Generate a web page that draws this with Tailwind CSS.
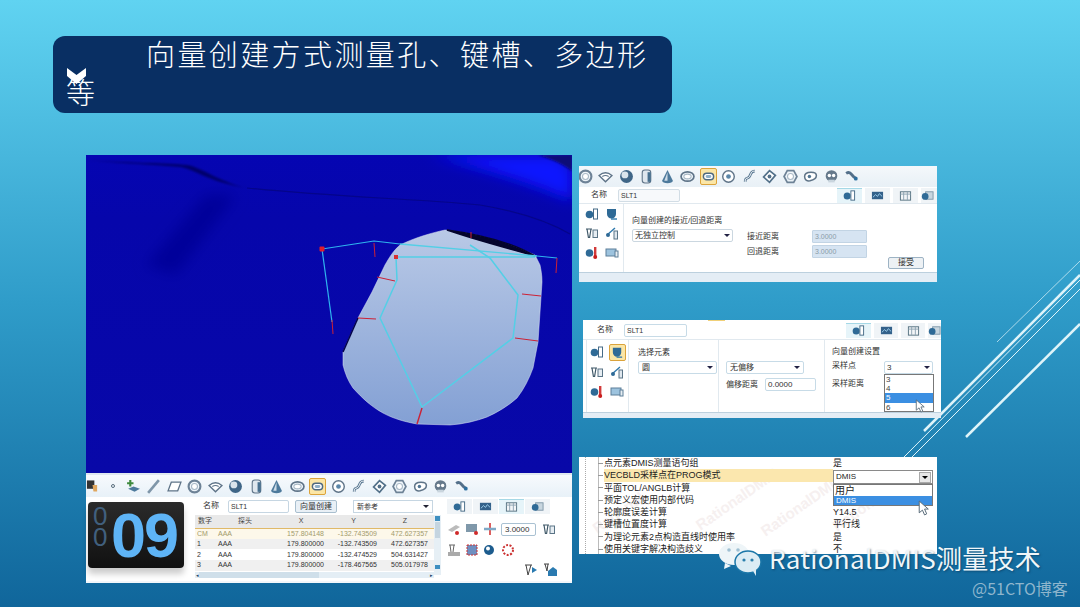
<!DOCTYPE html>
<html lang="en">

<head>
  <meta charset="UTF-8">
  <meta name="viewport" content="width=device-width, initial-scale=1.0">
  <script src="https://cdn.jsdelivr.net/npm/@tailwindcss/browser@4"></script>
  <title>向量创建方式测量孔、键槽、多边形等</title>
</head>

<body class="m-0 overflow-hidden">
  <!-- hidden symbols for the toolbar icons -->
  <svg width="0" height="0" class="absolute">
    <defs>
      <symbol id="i-ring" viewBox="0 0 14 14"><circle cx="7" cy="7" r="5.500" fill="none" stroke="#6d8296" stroke-width="2"/><circle cx="7" cy="7" r="2.800" fill="#fff" stroke="#a9b9c6"/></symbol>
      <symbol id="i-wifi" viewBox="0 0 14 14"><path d="M1 6q6-5 12 0l-6 6z" fill="#fff" stroke="#5f7488" stroke-width="1.300"/><path d="M4 7q3-2 6 0" fill="none" stroke="#5f7488"/></symbol>
      <symbol id="i-ball" viewBox="0 0 14 14"><circle cx="7" cy="7" r="6" fill="#3f6687"/><circle cx="5.500" cy="5.500" r="3.200" fill="#d9e4ec"/></symbol>
      <symbol id="i-cyl" viewBox="0 0 14 14"><rect x="3" y="1" width="8" height="12" rx="2.500" fill="#dfe7ee" stroke="#5f7488"/><rect x="8" y="3" width="3" height="9" fill="#48708f"/></symbol>
      <symbol id="i-cone" viewBox="0 0 14 14"><path d="M7 1 12 11a5 2.400 0 0 1-10 0z" fill="#4d7a9c"/><path d="M7 3 4 11h3z" fill="#cfdde8"/></symbol>
      <symbol id="i-oval" viewBox="0 0 14 14"><ellipse cx="7" cy="7" rx="6" ry="4.400" fill="none" stroke="#5f7488" stroke-width="1.600"/><ellipse cx="7" cy="7" rx="3.400" ry="2.200" fill="#fff" stroke="#a9b9c6"/></symbol>
      <symbol id="i-slot" viewBox="0 0 14 14"><rect x="1.500" y="3.500" width="11" height="7" rx="3.500" fill="#fff" stroke="#4f6a80" stroke-width="1.600"/><rect x="4" y="5.500" width="6" height="3" rx="1.500" fill="#8fb0c8"/></symbol>
      <symbol id="i-target" viewBox="0 0 14 14"><circle cx="7" cy="7" r="5.400" fill="#fff" stroke="#5f7488" stroke-width="1.300"/><circle cx="7" cy="7" r="2.200" fill="#5a86a8"/></symbol>
      <symbol id="i-curve" viewBox="0 0 14 14"><path d="M3 12c0-5 2-2 4-5s1-5 5-5" fill="none" stroke="#5f7d96" stroke-width="2.600"/><path d="M3 12c0-5 2-2 4-5s1-5 5-5" fill="none" stroke="#fff" stroke-width=".9"/></symbol>
      <symbol id="i-diamond" viewBox="0 0 14 14"><path d="M7 1.500 12.500 6 7 12.500 1.500 7.500z" fill="#fff" stroke="#527089" stroke-width="1.600"/><circle cx="7" cy="7" r="1.800" fill="#527089"/></symbol>
      <symbol id="i-hex" viewBox="0 0 14 14"><path d="M4 1.500h6L13 7l-3 5.500H4L1 7z" fill="none" stroke="#6d8296" stroke-width="1.600"/><circle cx="7" cy="7" r="2.800" fill="#fff" stroke="#a9b9c6"/></symbol>
      <symbol id="i-cam" viewBox="0 0 14 14"><path d="M1.500 7c0-3 3-4 6-4 3 0 5 1 5 3s-2 4-6 5c-3 .5-5-1-5-4z" fill="#fff" stroke="#5f7488" stroke-width="1.400"/><circle cx="6" cy="7" r="1.600" fill="#4f7492"/></symbol>
      <symbol id="i-gear" viewBox="0 0 14 14"><circle cx="7" cy="6.500" r="5.400" fill="#66798b"/><circle cx="5" cy="6" r="1.600" fill="#fff"/><circle cx="9" cy="6" r="1.600" fill="#fff"/><rect x="4" y="10" width="6" height="2.500" fill="#c9d5de"/></symbol>
      <symbol id="i-pipe" viewBox="0 0 14 14"><path d="M2 4q3-2 5 1t5 4" fill="none" stroke="#54708a" stroke-width="2.600"/><circle cx="11" cy="9" r="1.800" fill="#2d6f9f"/></symbol>
      <symbol id="i-probe" viewBox="0 0 14 14"><circle cx="4.500" cy="7.500" r="3.800" fill="#2f6a96"/><rect x="8.500" y="2" width="4" height="10" fill="#fff" stroke="#456a86"/></symbol>
      <symbol id="i-wave" viewBox="0 0 14 14"><rect x="1" y="3" width="12" height="8" fill="#33618a"/><path d="M2 9l3-3 2 2 2-3 3 3" fill="none" stroke="#9fd0ee"/></symbol>
      <symbol id="i-table" viewBox="0 0 14 14"><rect x="1.500" y="3" width="11" height="9" fill="#f2f5f7" stroke="#54707f"/><path d="M1.500 5.500h11M5 3v9M9 3v9" stroke="#8ea3b1"/></symbol>
      <symbol id="i-cube" viewBox="0 0 14 14"><rect x="5" y="3" width="8" height="8" fill="#c8d6df" stroke="#7f97a8"/><circle cx="4.500" cy="8" r="3.600" fill="#2f6a96"/></symbol>
      <symbol id="i-fork" viewBox="0 0 14 14"><path d="M1 3h6M2 3l1.500 9M6 3 4.500 12" fill="none" stroke="#3f5868" stroke-width="1.200"/><rect x="8" y="4" width="4.500" height="7.500" fill="#e6edf2" stroke="#5a7486"/></symbol>
      <symbol id="i-branch" viewBox="0 0 14 14"><path d="M2 9l8-7" stroke="#2f79ad" stroke-width="1.400"/><circle cx="3" cy="9" r="2" fill="#2f6a96"/><rect x="9" y="5" width="3.500" height="8" fill="#dfe7ee" stroke="#5a7486"/></symbol>
      <symbol id="i-therm" viewBox="0 0 14 14"><circle cx="4.500" cy="7" r="3.800" fill="#2f6a96"/><rect x="9" y="1" width="2.400" height="9" fill="#d23a3a"/><circle cx="10.200" cy="11" r="2" fill="#c81e1e"/></symbol>
      <symbol id="i-screen" viewBox="0 0 14 14"><rect x="1" y="3" width="10" height="7" fill="#9dc3de" stroke="#5d7f99"/><rect x="10" y="5" width="3" height="6" fill="#e6edf2" stroke="#5d7f99"/></symbol>
      <symbol id="i-head" viewBox="0 0 14 14"><path d="M2 2h9v5a4.500 4.500 0 0 1-9 0z" fill="#2f6a96"/><path d="M6 12h6" stroke="#2f79ad" stroke-width="1.400"/></symbol>
    </defs>
  </svg>

  <div class="relative w-[1080px] h-[607px] overflow-hidden bg-gradient-to-b from-[#60d3f1] via-[#2f9cc9] to-[#10669b] font-['Liberation_Sans','Noto_Sans_CJK_SC',sans-serif]">

    <!-- slide decoration lines -->
    <svg class="absolute inset-0" width="1080" height="607" viewBox="0 0 1080 607">
      <g stroke="#dff4f9" fill="none">
        <path d="M997 342 1080 261" stroke-width="1" opacity=".7"/>
        <path d="M924 431 1080 275" stroke-width="2.500"/>
        <path d="M904 457 1080 280" stroke-width="1"/>
        <path d="M912 457 1080 289" stroke-width="1"/>
        <path d="M966 437 1080 324" stroke-width="2.500"/>
      </g>
    </svg>

    <!-- title -->
    <div class="absolute left-[53px] top-[36px] w-[619px] h-[77px] rounded-[12px] bg-[#092f63] text-white font-['Noto_Sans_CJK_SC','Liberation_Serif',serif] font-light">
      <div class="-mt-[2px]">
        <p class="pl-[93px] text-[29px] leading-[38px] tracking-[2.400px] whitespace-nowrap">向量创建方式测量孔、键槽、多边形</p>
        <p class="pl-[13px] text-[29px] leading-[38px]">等</p>
      </div>
      <svg class="absolute left-[14px] top-[32px]" width="19" height="16" viewBox="0 0 19 16"><path d="M0 0 9.500 7 19 0V8L9.500 16 0 8z" fill="#fff"/></svg>
    </div>

    <!-- 3d view -->
    <svg class="absolute left-[86px] top-[155px]" width="486" height="318" viewBox="0 0 486 318">
      <defs>
        <linearGradient id="plate" x1="0" y1="0" x2="0" y2="1">
          <stop offset="0" stop-color="#b9c9e6"/>
          <stop offset="1" stop-color="#83a0d4"/>
        </linearGradient>
        <linearGradient id="field" x1="0" y1="0" x2="0" y2="1">
          <stop offset="0" stop-color="#0505b2"/>
          <stop offset=".2" stop-color="#0606ab"/>
          <stop offset="1" stop-color="#0808a8"/>
        </linearGradient>
        <filter id="soft" x="-20%" y="-50%" width="140%" height="200%"><feGaussianBlur stdDeviation="7"/></filter>
        <filter id="soft2" x="-20%" y="-50%" width="140%" height="200%"><feGaussianBlur stdDeviation="1.200"/></filter>
      </defs>
      <rect width="486" height="318" fill="url(#field)"/>
      <path d="M344 0H470L486 14V46C450 30 400 14 344 0z" fill="#0a14ff" filter="url(#soft)"/>
      <path d="M452 0H486V16C476 8 464 4 452 0z" fill="#0a0c78" filter="url(#soft2)"/>
      <path d="M60 110 120 40 150 40 90 120z" fill="#06069a" filter="url(#soft)"/>
      <!-- crease across the part -->
      <path d="M1 5C40 8 80 8 101 10 115 12 135 28 161 33 120 26 110 15 95 12 60 9 30 8 1 5z" fill="#05056a" filter="url(#soft2)"/>
      <path d="M161 33C210 38 260 41 294 43 330 45 365 47 394 50 430 56 460 65 484 79" fill="none" stroke="#05058a" stroke-width="1.200"/>
      <!-- lit slot -->
      <path d="M359 75C345 78 328 83 314 90 307 96 303 103 299 110L286 137 272 163 257 197 257 210C259 218 262 226 267 233 277 244 286 252 297 258 308 264 320 267 331 269L364 270C378 269 390 266 401 262 412 257 422 251 431 243 438 234 443 224 447 213L452 187 456 127C456 120 455 115 454 110L449 100C433 93 417 87 401 83 387 79 373 77 359 75z" fill="url(#plate)" stroke="#dfe7f5" stroke-width=".5"/>
      <path d="M361 75C390 79 425 87 449 101 425 94 390 85 361 75z" fill="#04042c" stroke="#04042c" stroke-width="1.500"/>
      <path d="M272 163 257 197" stroke="#03034a" stroke-width="1.500"/>
      <!-- measured path -->
      <g fill="none" stroke-linejoin="round">
        <path d="M236 94 288 86 314 89" stroke="#2fb4ee" stroke-width="1.200"/>
        <path d="M236 94 246 167" stroke="#2fb4ee" stroke-width="1.200"/>
        <path d="M451 101 471 103" stroke="#2fb4ee" stroke-width="1.200"/>
        <path d="M314 89 451 101" stroke="#53cfe6" stroke-width="1.400"/>
        <path d="M310 102H449" stroke="#53cfe6" stroke-width="1.400"/>
        <path d="M310 102 311 125 294 163 336 252 427 183 432 140 404 103 384 90" stroke="#53cfe6" stroke-width="1.500"/>
      </g>
      <g stroke="#cc2136" fill="none" stroke-width="1">
        <path d="M288 88 289 102M471 103 470 118M385 77V83M246 165 247 179"/>
        <path d="M291 122 309 126M272 163 290 164M436 139 455 141M429 183 452 186"/>
        <path d="M336 253 331 269" stroke-width="1.400"/>
      </g>
      <rect x="233.500" y="91.500" width="5" height="5" rx="1" fill="#e01c2c"/>
      <rect x="308" y="100" width="4" height="4" fill="#d83030"/>
    </svg>

    <!-- bottom panel -->
    <div class="absolute left-[86px] top-[473px] w-[486px] h-[110px] bg-[#f3f7fb] text-[7px] text-[#333] border-t-2 border-[#dfe8f0]">
      <div class="h-[22px] bg-gradient-to-b from-[#f7fafd] to-[#e8f1f8]">
        <div class="-ml-[4px] h-full grid grid-cols-[repeat(19,20.500px)] items-center justify-items-center">
          <svg width="13" height="14" viewBox="0 0 14 14"><rect x="1" y="1" width="8" height="9" fill="#333"/><path d="M7 6h5v7H8z" fill="#e0a75f"/></svg>
          <span class="w-[4px] h-[4px] rounded-full border border-[#596d7d]"></span>
          <svg width="15" height="15" viewBox="0 0 14 14"><path d="M4 1v6M1 4h6" stroke="#3e8a3e" stroke-width="2"/><path d="M2 9l5-2 6 2-5 3z" fill="#4d7a9c"/></svg>
          <svg width="15" height="15" viewBox="0 0 14 14"><path d="M2 13 12 1" stroke="#7f96a9" stroke-width="2.400"/></svg>
          <svg width="15" height="15" viewBox="0 0 14 14"><path d="M4 3h9L10 11H1z" fill="#fff" stroke="#5f7488" stroke-width="1.200"/></svg>
          <svg width="15" height="15"><use href="#i-ring"/></svg>
          <svg width="15" height="15"><use href="#i-wifi"/></svg>
          <svg width="15" height="15"><use href="#i-ball"/></svg>
          <svg width="15" height="15"><use href="#i-cyl"/></svg>
          <svg width="15" height="15"><use href="#i-cone"/></svg>
          <svg width="15" height="15"><use href="#i-oval"/></svg>
          <span class="flex items-center justify-center w-[17px] h-[17px] rounded-[2px] bg-[#fbe6a6] border border-[#dba33b]"><svg width="13" height="13"><use href="#i-slot"/></svg></span>
          <svg width="15" height="15"><use href="#i-target"/></svg>
          <svg width="15" height="15"><use href="#i-curve"/></svg>
          <svg width="15" height="15"><use href="#i-diamond"/></svg>
          <svg width="15" height="15"><use href="#i-hex"/></svg>
          <svg width="15" height="15"><use href="#i-cam"/></svg>
          <svg width="15" height="15"><use href="#i-gear"/></svg>
          <svg width="15" height="15"><use href="#i-pipe"/></svg>
        </div>
      </div>

      <div class="flex bg-white h-[84px]">
        <!-- counter -->
        <div class="relative ml-[2px] mt-[5px] w-[96px] h-[66px] rounded-[4px] bg-gradient-to-b from-[#2b2b2b] to-[#111] shadow-[0_6px_6px_rgba(0,0,0,.2)]">
          <div class="absolute left-[5px] top-[4px] text-[#41607e] text-[26px] leading-[21px] flex flex-col"><span>0</span><span>0</span></div>
          <div class="absolute left-[23px] top-[2px] text-[#5eb4f6] text-[63px] leading-[62px] font-bold tracking-[-2px]">09</div>
        </div>

        <div class="ml-[11px] flex-1 flex flex-col">
          <div class="flex items-center h-[18px] pl-[8px]">
            <span class="text-[8px] text-[#333] mr-[9px]">名称</span>
            <span class="w-[61px] h-[13px] rounded-[2px] border border-[#c6d6e2] bg-white text-[7px] leading-[11px] pl-[2px]">SLT1</span>
            <span class="ml-[6px] w-[42px] h-[13px] rounded-[2px] border border-[#a9bfcf] bg-[#e9f0f6] text-[8px] leading-[11px] text-center">向量创建</span>
            <span class="ml-[16px] w-[80px] h-[13px] border border-[#c6d6e2] bg-white text-[7px] leading-[11px] pl-[3px] flex justify-between items-center pr-[3px]">新参考<i class="w-0 h-0 border-x-[3px] border-t-[3px] border-x-transparent border-t-[#223]"></i></span>
            <div class="ml-[14px] flex gap-[1px] items-center">
              <span class="w-[25px] h-[15px] flex justify-center items-center bg-[#f0f4f7]"><svg width="13" height="13"><use href="#i-probe"/></svg></span>
              <span class="w-[25px] h-[15px] flex justify-center items-center bg-[#f0f4f7]"><svg width="13" height="13"><use href="#i-wave"/></svg></span>
              <span class="w-[25px] h-[15px] flex justify-center items-center bg-[#e6f4f9] border-t border-[#a5d8e6]"><svg width="13" height="13"><use href="#i-table"/></svg></span>
              <span class="w-[25px] h-[15px] flex justify-center items-center bg-[#f0f4f7]"><svg width="13" height="13"><use href="#i-cube"/></svg></span>
            </div>
          </div>

          <div class="flex">
            <!-- measurement table -->
            <div class="w-[239px]">
              <table class="w-full table-fixed text-[7px] leading-[10px]">
                <thead>
                  <tr class="h-[13px] bg-[#e9e9e9] text-[#444] border-b border-[#e0b968]">
                    <th class="font-normal w-[20px]">数字</th><th class="font-normal w-[60px]">探头</th><th class="font-normal w-[52px]">X</th><th class="font-normal w-[53px]">Y</th><th class="font-normal pr-[4px]">Z</th>
                  </tr>
                </thead>
                <tbody class="text-right">
                  <tr class="h-[10.700px] bg-[#fdf8ea] text-[#a39b6c]"><td class="text-left pl-[2px]">CM</td><td class="text-left pl-[3px]">AAA</td><td class="pr-[3px]">157.804148</td><td class="pr-[3px]">-132.743509</td><td class="pr-[6px]">472.627357</td></tr>
                  <tr class="h-[10.700px] bg-[#f0f0f0]"><td class="text-left pl-[2px]">1</td><td class="text-left pl-[3px]">AAA</td><td class="pr-[3px]">179.800000</td><td class="pr-[3px]">-132.743509</td><td class="pr-[6px]">472.627357</td></tr>
                  <tr class="h-[10.700px] bg-white"><td class="text-left pl-[2px]">2</td><td class="text-left pl-[3px]">AAA</td><td class="pr-[3px]">179.800000</td><td class="pr-[3px]">-132.474529</td><td class="pr-[6px]">504.631427</td></tr>
                  <tr class="h-[10.700px] bg-[#f0f0f0]"><td class="text-left pl-[2px]">3</td><td class="text-left pl-[3px]">AAA</td><td class="pr-[3px]">179.800000</td><td class="pr-[3px]">-178.467565</td><td class="pr-[6px]">505.017978</td></tr>
                </tbody>
              </table>
              <div class="h-[6px] bg-[#e4eef5] mt-[1px] flex justify-between px-[1px] text-[5px] leading-[6px] text-[#246]"><span>◂</span><span class="w-[120px] bg-[#cfdfea]"></span><span class="ml-auto">▸</span></div>
            </div>
            <div class="w-[7px] h-[60px] bg-[#e6eff5] flex flex-col items-center">
              <span class="mt-[1px] w-[5px] h-[5px] bg-[#3f8fc0]"></span>
              <span class="mt-[1px] w-[5px] h-[16px] bg-[#c5d5e0]"></span>
              <span class="mt-auto mb-[6px] w-[5px] h-[4px] bg-[#3f8fc0]"></span>
            </div>

            <div class="ml-[6px] flex-1 pt-[7px]">
              <div class="flex items-center gap-[4px]">
                <svg width="14" height="14" viewBox="0 0 14 14"><path d="M1 8l8-5 4 2-8 5z" fill="#bbb"/><circle cx="10" cy="11" r="2" fill="#d02a2a"/></svg>
                <svg width="14" height="14" viewBox="0 0 14 14"><rect x="1" y="2" width="11" height="8" fill="#7f98aa"/><circle cx="11" cy="11" r="2" fill="#d02a2a"/></svg>
                <svg width="14" height="14" viewBox="0 0 14 14"><path d="M7 1v12" stroke="#d02a2a" stroke-width="1.500"/><path d="M1 7h12" stroke="#7fa9c6" stroke-width="2.500"/></svg>
                <span class="w-[35px] h-[13px] rounded-[2px] border border-[#a9c1d2] text-[8px] leading-[11px] pl-[3px] bg-white">3.0000</span>
                <svg width="14" height="14" class="ml-[2px]"><use href="#i-fork"/></svg>
              </div>
              <div class="flex items-center gap-[4px] mt-[7px]">
                <svg width="14" height="14" viewBox="0 0 14 14"><path d="M2 2h6M3 2l1 7M7 2 6 9" stroke="#666" fill="none"/><rect x="1" y="9" width="12" height="4" fill="#aaa"/></svg>
                <svg width="14" height="14" viewBox="0 0 14 14"><rect x="2" y="2" width="10" height="10" fill="#6f8fc0" stroke="#c33" stroke-dasharray="2 1"/></svg>
                <svg width="14" height="14" viewBox="0 0 14 14"><circle cx="6" cy="7" r="5" fill="#1d5c8e"/><circle cx="5" cy="5.500" r="2" fill="#fff"/></svg>
                <svg width="14" height="14" class="ml-[1px]" viewBox="0 0 14 14"><circle cx="6" cy="7" r="5" fill="none" stroke="#c33" stroke-dasharray="2 1.500" stroke-width="2"/></svg>
              </div>
              <div class="flex justify-end gap-[6px] mt-[6px] pr-[15px]">
                <svg width="14" height="14" viewBox="0 0 14 14"><path d="M2 2h7M3 2l2 10M8 2 5 12" stroke="#444" fill="none"/><path d="M9 4l5 3-5 3z" fill="#2a7ab0"/></svg>
                <svg width="14" height="14" viewBox="0 0 14 14"><path d="M1 1h5M2 1l2 7M5 1 4 8" stroke="#444" fill="none"/><path d="M5 8l5-4 4 3v6H5z" fill="#2a7ab0"/></svg>
              </div>
            </div>
          </div>
        </div>
      </div>
    </div>

    <!-- approach/retract window -->
    <div class="absolute left-[579px] top-[166px] w-[358px] h-[116px] bg-white text-[8px] text-[#333] overflow-hidden">
      <div class="h-[21px] bg-gradient-to-b from-[#f4f8fb] to-[#e8f0f6]">
        <div class="-ml-[4px] h-full grid grid-cols-[repeat(14,20.500px)] items-center justify-items-center">
          <svg width="15" height="15"><use href="#i-ring"/></svg>
          <svg width="15" height="15"><use href="#i-wifi"/></svg>
          <svg width="15" height="15"><use href="#i-ball"/></svg>
          <svg width="15" height="15"><use href="#i-cyl"/></svg>
          <svg width="15" height="15"><use href="#i-cone"/></svg>
          <svg width="15" height="15"><use href="#i-oval"/></svg>
          <span class="flex items-center justify-center w-[17px] h-[17px] rounded-[2px] bg-[#fbe6a6] border border-[#dba33b]"><svg width="13" height="13"><use href="#i-slot"/></svg></span>
          <svg width="15" height="15"><use href="#i-target"/></svg>
          <svg width="15" height="15"><use href="#i-curve"/></svg>
          <svg width="15" height="15"><use href="#i-diamond"/></svg>
          <svg width="15" height="15"><use href="#i-hex"/></svg>
          <svg width="15" height="15"><use href="#i-cam"/></svg>
          <svg width="15" height="15"><use href="#i-gear"/></svg>
          <svg width="15" height="15"><use href="#i-pipe"/></svg>
        </div>
      </div>
      <div class="flex items-center h-[17px] pl-[12px] border-b border-[#e1e9ef]">
        <span class="text-[8px] mr-[11px]">名称</span>
        <span class="w-[62px] h-[13px] rounded-[2px] border border-[#d2dde5] bg-[#f7f9fb] text-[7px] leading-[11px] pl-[2px]">SLT1</span>
        <div class="ml-auto flex gap-[3px]">
          <span class="w-[25px] h-[15px] flex justify-center items-center bg-[#e6f4f9] border-t border-[#a5d8e6]"><svg width="13" height="13"><use href="#i-probe"/></svg></span>
          <span class="w-[25px] h-[15px] flex justify-center items-center bg-[#f0f4f7]"><svg width="13" height="13"><use href="#i-wave"/></svg></span>
          <span class="w-[25px] h-[15px] flex justify-center items-center bg-[#f0f4f7]"><svg width="13" height="13"><use href="#i-table"/></svg></span>
          <span class="w-[16px] h-[15px] flex items-center bg-[#f0f4f7] overflow-hidden"><svg width="13" height="13" class="shrink-0"><use href="#i-cube"/></svg></span>
        </div>
      </div>
      <div class="flex h-[68px]">
        <div class="w-[45px] border-r border-[#e1e9ef] grid grid-cols-[20px_20px] auto-rows-[19.500px] items-center justify-items-center content-start pl-[3px]">
          <svg width="14" height="14"><use href="#i-probe"/></svg>
          <svg width="14" height="14"><use href="#i-head"/></svg>
          <svg width="14" height="14"><use href="#i-fork"/></svg>
          <svg width="14" height="14"><use href="#i-branch"/></svg>
          <svg width="14" height="14"><use href="#i-therm"/></svg>
          <svg width="14" height="14"><use href="#i-screen"/></svg>
        </div>
        <div class="pl-[8px] pt-[11px] w-[115px]">
          <div class="leading-[11px] whitespace-nowrap">向量创建的接近/回退距离</div>
          <div class="mt-[3px] w-[101px] h-[13px] rounded-[2px] border border-[#cbd7e0] flex items-center justify-between px-[2px]">无独立控制<i class="w-0 h-0 border-x-[3px] border-t-[3px] border-x-transparent border-t-[#224]"></i></div>
        </div>
        <div class="pl-[8px] pt-[25px]">
          <div class="flex items-center h-[15px]"><span class="w-[65px]">接近距离</span><span class="w-[55px] h-[13px] bg-[#d6e4f2] border border-[#c2d4e4] rounded-[1px] text-[7px] leading-[11px] text-[#8a9ba8] pl-[2px]">3.0000</span></div>
          <div class="flex items-center h-[15px]"><span class="w-[65px]">回退距离</span><span class="w-[55px] h-[13px] bg-[#d6e4f2] border border-[#c2d4e4] rounded-[1px] text-[7px] leading-[11px] text-[#8a9ba8] pl-[2px]">3.0000</span></div>
        </div>
        <div class="ml-auto mr-[13px] self-end mb-[3px] w-[36px] h-[12px] rounded-[2px] border border-[#9db3c4] bg-[#edf1f4] text-center text-[8px] leading-[10px]">接受</div>
      </div>
      <div class="h-[10px] bg-[#e4edf5] border-t border-[#bcd0de]"></div>
    </div>

    <!-- selection window -->
    <div class="absolute left-[583px] top-[320px] w-[358px] h-[98px] bg-white text-[8px] text-[#333] overflow-hidden">
      <div class="h-[1px] ml-[125px] w-[17px] bg-[#f0d078]"></div>
      <div class="flex items-center h-[19px] pl-[14px] border-b border-[#e1e9ef]">
        <span class="text-[8px] mr-[11px]">名称</span>
        <span class="w-[63px] h-[13px] rounded-[2px] border border-[#c7dbe7] text-[7px] leading-[11px] pl-[2px]">SLT1</span>
        <div class="ml-auto flex gap-[3px]">
          <span class="w-[25px] h-[15px] flex justify-center items-center bg-[#e6f4f9] border-t border-[#a5d8e6]"><svg width="13" height="13"><use href="#i-probe"/></svg></span>
          <span class="w-[24px] h-[15px] flex justify-center items-center bg-[#f0f4f7]"><svg width="13" height="13"><use href="#i-wave"/></svg></span>
          <span class="w-[24px] h-[15px] flex justify-center items-center bg-[#f0f4f7]"><svg width="13" height="13"><use href="#i-table"/></svg></span>
          <span class="w-[13px] h-[15px] flex items-center bg-[#f0f4f7] overflow-hidden"><svg width="13" height="13" class="shrink-0"><use href="#i-cube"/></svg></span>
        </div>
      </div>
      <div class="flex h-[72px]">
        <div class="ml-[3px] w-[43px] border-x border-[#e1e9ef] grid grid-cols-[20px_20px] auto-rows-[20px] items-center justify-items-center content-start pt-[2px]">
          <svg width="14" height="14"><use href="#i-probe"/></svg>
          <span class="flex items-center justify-center w-[17px] h-[17px] rounded-[2px] bg-[#fbe6a6] border border-[#dba33b]"><svg width="13" height="13"><use href="#i-head"/></svg></span>
          <svg width="14" height="14"><use href="#i-fork"/></svg>
          <svg width="14" height="14"><use href="#i-branch"/></svg>
          <svg width="14" height="14"><use href="#i-therm"/></svg>
          <svg width="14" height="14"><use href="#i-screen"/></svg>
        </div>
        <div class="w-[90px] border-r border-[#e1e9ef] pl-[9px] pt-[7px]">
          <div class="leading-[11px]">选择元素</div>
          <div class="mt-[3px] w-[79px] h-[13px] rounded-[2px] border border-[#c7dbe7] flex items-center justify-between px-[3px]">圆<i class="w-0 h-0 border-x-[3px] border-t-[3px] border-x-transparent border-t-[#224]"></i></div>
        </div>
        <div class="w-[106px] border-r border-[#e1e9ef] pl-[7px] pt-[21px]">
          <div class="w-[78px] h-[13px] rounded-[2px] border border-[#c7dbe7] flex items-center justify-between px-[3px]">无偏移<i class="w-0 h-0 border-x-[3px] border-t-[3px] border-x-transparent border-t-[#224]"></i></div>
          <div class="mt-[4px] flex items-center gap-[7px]"><span>偏移距离</span><span class="w-[51px] h-[13px] rounded-[2px] border border-[#c7dbe7] text-[8px] leading-[11px] pl-[2px]">0.0000</span></div>
        </div>
        <div class="relative pl-[7px] pt-[6px] flex-1">
          <div class="leading-[11px]">向量创建设置</div>
          <div class="mt-[3px] leading-[11px]">采样点</div>
          <div class="mt-[7px] leading-[11px]">采样距离</div>
          <div class="absolute left-[59px] top-[21px] w-[49px] h-[13px] rounded-[2px] border border-[#c7dbe7] flex items-center justify-between px-[2px] bg-white">3<i class="w-0 h-0 border-x-[3px] border-t-[3px] border-x-transparent border-t-[#224]"></i></div>
          <ul class="absolute left-[59px] top-[34px] w-[50px] h-[38px] border border-[#777] bg-white leading-[9.200px] pl-[1px] text-[#444]">
            <li>3</li>
            <li>4</li>
            <li class="-ml-[1px] pl-[1px] bg-[#3b8fe2] text-white">5</li>
            <li>6</li>
          </ul>
          <svg class="absolute left-[90px] top-[59px]" width="10" height="14" viewBox="0 0 10 15"><path d="M1 1v11l3-2.500 2 4.500 2-1-2-4.500h3.500z" fill="#fff" stroke="#546675" stroke-width=".9"/></svg>
        </div>
      </div>
      <div class="h-[6px] bg-[#e4edf5] border-t border-[#bcd0de]"></div>
    </div>

    <!-- settings tree -->
    <div class="absolute left-[579px] top-[457px] w-[358px] h-[97px] bg-white text-[9px] leading-[12.300px] text-[#222] overflow-hidden">
      <span class="absolute left-[110px] top-[36px] text-[#f6f0f0] text-[15px] font-bold -rotate-[35deg]">RationalDMIS</span>
      <span class="absolute left-[175px] top-[42px] text-[#f6f0f0] text-[15px] font-bold -rotate-[35deg]">RationalDMIS</span>
      <span class="absolute left-[250px] top-[48px] text-[#f6f0f0] text-[15px] font-bold -rotate-[35deg]">Rational</span>
      <span class="absolute left-[10px] top-[50px] text-[#f6f0f0] text-[15px] font-bold -rotate-[35deg]">Rational</span>
      <i class="absolute left-[6px] top-0 bottom-0 border-l border-dotted border-[#aaa]"></i>
      <i class="absolute left-[19px] top-0 bottom-0 border-l border-[#bbb]"></i>
      <div class="relative grid grid-cols-[254px_1fr]">
        <span class="pl-[19px] flex items-center whitespace-nowrap"><i class="w-[5px] h-px bg-[#999] mr-px"></i>点元素DMIS测量语句组</span><span>是</span>
        <span class="pl-[19px] flex items-center whitespace-nowrap"><i class="w-[5px] h-px bg-[#999] mr-px"></i><span class="bg-[#fbe7ae] w-full">VECBLD采样点在PROG模式</span></span><span></span>
        <span class="pl-[19px] flex items-center whitespace-nowrap"><i class="w-[5px] h-px bg-[#999] mr-px"></i>平面TOL/ANGLB计算</span><span></span>
        <span class="pl-[19px] flex items-center whitespace-nowrap"><i class="w-[5px] h-px bg-[#999] mr-px"></i>预定义宏使用内部代码</span><span></span>
        <span class="pl-[19px] flex items-center whitespace-nowrap"><i class="w-[5px] h-px bg-[#999] mr-px"></i>轮廓度误差计算</span><span>Y14.5</span>
        <span class="pl-[19px] flex items-center whitespace-nowrap"><i class="w-[5px] h-px bg-[#999] mr-px"></i>键槽位置度计算</span><span>平行线</span>
        <span class="pl-[19px] flex items-center whitespace-nowrap"><i class="w-[5px] h-px bg-[#999] mr-px"></i>为理论元素2点构造直线时使用率</span><span>是</span>
        <span class="pl-[19px] flex items-center whitespace-nowrap"><i class="w-[5px] h-px bg-[#999] mr-px"></i>使用关键字解决构造歧义</span><span>不</span>
      </div>
      <div class="absolute left-[254px] top-[13px] w-[100px] h-[14px] border border-[#8a8a8a] bg-white flex items-center justify-between pl-[2px] text-[8px]">DMIS<span class="w-[12px] h-[11px] mr-[1px] bg-[#e8e8e8] border border-[#aaa] flex items-center justify-center"><i class="w-0 h-0 border-x-[3px] border-t-[3px] border-x-transparent border-t-black"></i></span></div>
      <div class="absolute left-[254px] top-[27px] w-[100px] h-[22px] border border-[#777] bg-white">
        <div class="pl-[1px] text-[10px] leading-[11px]">用户</div>
        <div class="pl-[2px] bg-[#3b8fe2] text-white text-[8px] leading-[9px]">DMIS</div>
      </div>
      <svg class="absolute left-[339px] top-[43px]" width="11" height="16" viewBox="0 0 10 15"><path d="M1 1v11l3-2.500 2 4.500 2-1-2-4.500h3.500z" fill="#fff" stroke="#546675" stroke-width=".9"/></svg>
    </div>

    <!-- watermark logo -->
    <svg class="absolute left-[718px] top-[541px]" width="46" height="36" viewBox="0 0 46 36">
      <ellipse cx="16" cy="13" rx="15" ry="11" fill="#eef5f8"/>
      <path d="M7 22 6 28l7-3z" fill="#eef5f8"/>
      <circle cx="11" cy="9" r="1.800" fill="#9fc0d2"/><circle cx="20" cy="9" r="1.800" fill="#9fc0d2"/>
      <ellipse cx="30" cy="21" rx="13" ry="11" fill="#dcecf4" stroke="#1a76a8" stroke-width="1.500"/>
      <path d="M35 30 38 35 38 28z" fill="#dcecf4"/>
      <circle cx="26" cy="19" r="1.600" fill="#2c7fad"/><circle cx="34" cy="19" r="1.600" fill="#2c7fad"/>
    </svg>
    <div class="absolute left-[769px] top-[541px] text-[26px] leading-[34px] text-[#f0f6f9] font-['Noto_Sans_CJK_SC',sans-serif] [text-shadow:1px_1px_2px_rgba(0,40,70,.5)] tracking-[.3px] whitespace-nowrap">RationalDMIS测量技术</div>
    <div class="absolute left-[972px] top-[578px] text-[16px] leading-[20px] text-[#8fb6cd] font-['Noto_Sans_CJK_SC',sans-serif] whitespace-nowrap">@51CTO博客</div>
  </div>
</body>

</html>
